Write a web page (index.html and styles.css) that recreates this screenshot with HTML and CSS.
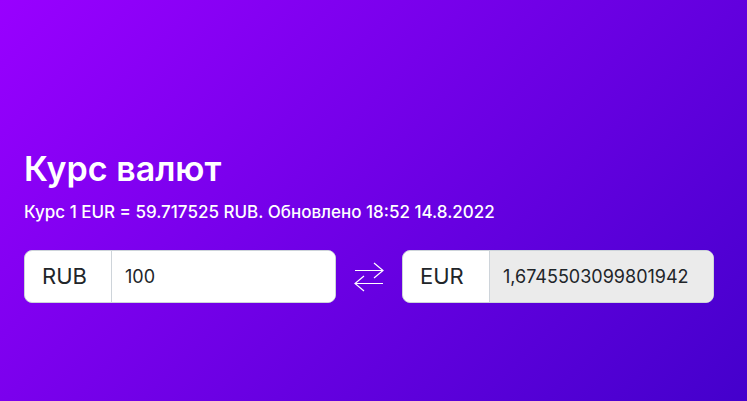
FILE: index.html
```html
<!DOCTYPE html>
<html lang="ru">
<head>
  <meta charset="utf-8">
  <meta name="viewport" content="width=device-width, initial-scale=1">
  <title>Курс валют</title>
  <link rel="stylesheet" href="styles.css">
</head>
<body>
  <main class="converter">
    <h1 class="title">Курс валют</h1>
    <p class="rate">Курс 1 EUR = 59.717525 RUB. Обновлено 18:52 14.8.2022</p>
    <form class="exchange">
      <div class="field">
        <label class="currency" for="from">RUB</label>
        <input class="amount" id="from" type="text" inputmode="decimal" value="100">
      </div>
      <button class="swap" type="button" aria-label="Поменять валюты">
        <svg class="swap-icon" viewBox="0 0 30 30" aria-hidden="true">
          <path d="M1 9.500H29M20 2L29 9.500L20 17M29 22.500H1M10 15L1 22.500L10 30"/>
        </svg>
      </button>
      <div class="field">
        <label class="currency" for="to">EUR</label>
        <input class="amount" id="to" type="text" value="1,6745503099801942" readonly>
      </div>
    </form>
  </main>
</body>
</html>
```

FILE: styles.css
```css
* {
  box-sizing: border-box;
}

body {
  margin: 0;
  min-height: 100vh;
  display: flex;
  align-items: center;
  background: linear-gradient(135deg, #9900ff, #4400cc);
  color: #fff;
  font-family: Inter, "Liberation Sans", sans-serif;
}

.converter {
  width: 100%;
  padding: 48px 33px 0 24px;
}

.title {
  margin: 0 0 8px;
  font-size: 34px;
  font-weight: 600;
  line-height: 44px;
}

.rate {
  margin: 0 0 24px;
  font-size: 17px;
  font-weight: 500;
  line-height: 27px;
}

.exchange {
  display: flex;
  align-items: center;
}

.field {
  flex: 1;
  min-width: 0;
  height: 53px;
  display: flex;
  overflow: hidden;
  border: 1px solid #ced4da;
  border-radius: 8px;
  background: #fff;
  color: #212529;
}

.currency {
  width: 87px;
  flex: none;
  display: flex;
  align-items: center;
  padding-left: 17px;
  border-right: 1px solid #ced4da;
  font-size: 22px;
}

.amount {
  flex: 1;
  min-width: 0;
  padding: 0 13px;
  border: 0;
  outline: 0;
  background: #fff;
  color: inherit;
  font: inherit;
  font-size: 18px;
}

.amount:read-only {
  background: #ebebeb;
}

.swap {
  width: 66px;
  padding: 0;
  display: flex;
  justify-content: center;
  border: 0;
  background: none;
  color: inherit;
  cursor: pointer;
}

.swap-icon {
  width: 30px;
  height: 30px;
  overflow: visible;
  fill: none;
  stroke: currentColor;
  stroke-width: 1.2;
}
```
